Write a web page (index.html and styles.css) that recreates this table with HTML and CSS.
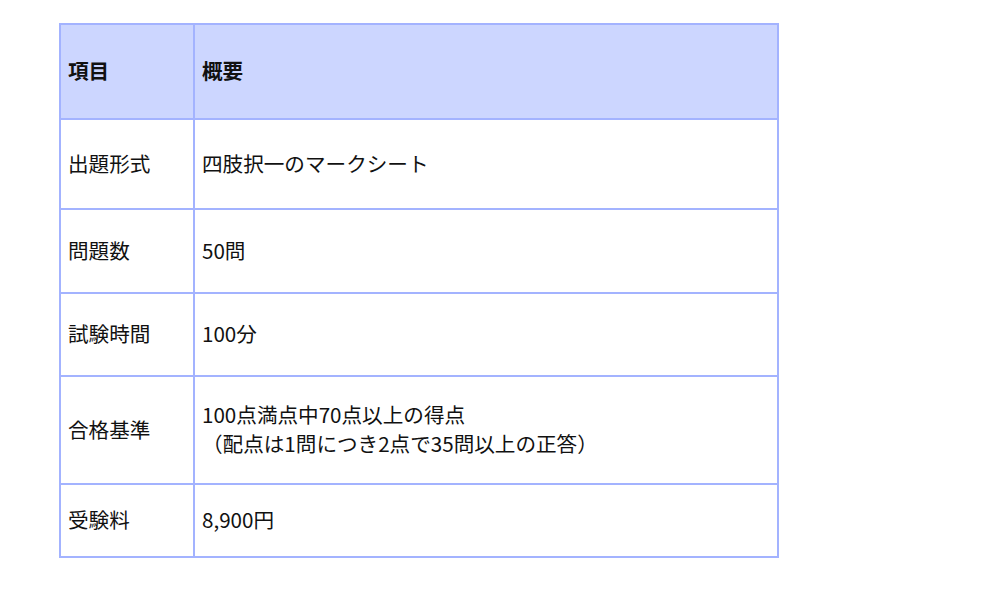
FILE: index.html
```html
<!DOCTYPE html>
<html lang="ja">
<head>
<meta charset="utf-8">
<link rel="stylesheet" href="styles.css">
</head>
<body>
<div class="wrap">
<table class="info">
  <thead>
    <tr class="r-head"><th class="c1">項目</th><th>概要</th></tr>
  </thead>
  <tbody>
    <tr class="r1"><td class="c1">出題形式</td><td>四肢択一のマークシート</td></tr>
    <tr class="r2"><td class="c1">問題数</td><td>50問</td></tr>
    <tr class="r3"><td class="c1">試験時間</td><td>100分</td></tr>
    <tr class="r4"><td class="c1">合格基準</td><td>100点満点中70点以上の得点<br>（配点は1問につき2点で35問以上の正答）</td></tr>
    <tr class="r5"><td class="c1">受験料</td><td>8,900円</td></tr>
  </tbody>
</table>
</div>
</body>
</html>
```

FILE: styles.css
```css
html, body { margin: 0; padding: 0; background: #ffffff; }
body { font-family: "Noto Sans CJK JP", "Noto Sans", sans-serif; color: #111; }
.wrap { padding: 23px 0 0 59px; }
.info {
  border-collapse: collapse;
  width: 720px;
  font-size: 20.6px;
  line-height: 29px;
}
.info th, .info td {
  border: 2px solid #a3b3ff;
  padding: 0 7px 2px;
  text-align: left;
  vertical-align: middle;
}
.info th { background: #ccd6ff; font-weight: 700; }
.info td { font-weight: 400; }
.info .c1 { width: 118px; }
.r-head { height: 95px; }
.r1 { height: 90px; }
.r2 { height: 84px; }
.r3 { height: 83px; }
.r4 { height: 108px; }
.r5 { height: 73px; }
```
